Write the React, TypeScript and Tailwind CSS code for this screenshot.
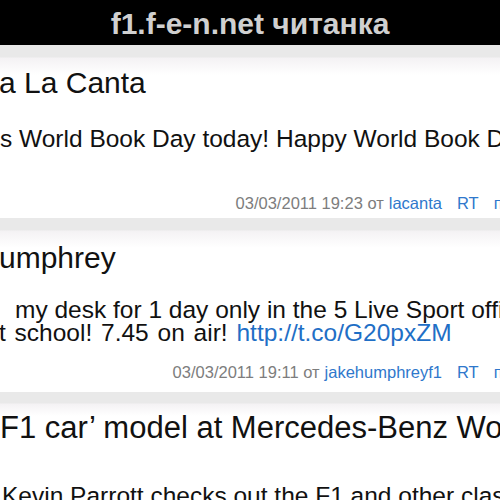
import React from "react";

type Post = {
  title: string;
  lines: React.ReactNode[];
  date: string;
  user: string;
  padTop: string;
  bodyGap: string;
  metaGap: string;
  height: string;
};

const posts: Post[] = [
  {
    title: "a La Canta",
    lines: [<span>s World Book Day today! Happy World Book Day</span>],
    date: "03/03/2011 19:23",
    user: "lacanta",
    padTop: "pt-[23px]",
    bodyGap: "mt-[29px]",
    metaGap: "mt-[45px]",
    height: "h-[173px]",
  },
  {
    title: "umphrey",
    lines: [
      <span className="pl-[15px]">my desk for 1 day only in the 5 Live Sport office</span>,
      <span className="-ml-[1px] [word-spacing:2px]">
        t school! 7.45 on air!{" "}
        <span className="text-[#1f6fc6] [word-spacing:0px]">http://t.co/G20pxZM</span>
      </span>,
    ],
    date: "03/03/2011 19:11",
    user: "jakehumphreyf1",
    padTop: "pt-[25px]",
    bodyGap: "mt-[25px]",
    metaGap: "mt-[20px]",
    height: "h-[174px]",
  },
];

function Meta({ date, user }: { date: string; user: string }) {
  return (
    <div className="flex justify-end text-[16.5px] leading-[16px] whitespace-nowrap">
      <span className="text-[#7d7d7d]">{date} от </span>
      <span className="ml-[5px] text-[#2f78cc]">{user}</span>
      <div className="w-[58px] shrink-0 flex text-[#2f78cc]">
        <span className="ml-[15px]">RT</span>
        <span className="ml-[15px]">перевести</span>
      </div>
    </div>
  );
}

function Card({ post }: { post: Post }) {
  return (
    <div
      className={`${post.height} ${post.padTop} bg-[linear-gradient(#e9e9e9_0px,#e9e9e9_12px,#f4f2f4_13px,#ffffff_30px)]`}
    >
      <div className="text-[30px] leading-[30px] text-[#111] whitespace-nowrap -ml-[1px]">
        {post.title}
      </div>
      <div className={`${post.bodyGap} text-[24.5px] leading-[23px] text-[#111]`}>
        {post.lines.map((line, i) => (
          <div key={i} className="whitespace-nowrap">
            {line}
          </div>
        ))}
      </div>
      <div className={post.metaGap}>
        <Meta date={post.date} user={post.user} />
      </div>
    </div>
  );
}

export default function App() {
  return (
    <div className="w-[500px] h-[500px] overflow-hidden bg-white font-['Liberation_Sans',Arial,sans-serif]">
      <div className="h-[45px] bg-black flex items-center justify-center">
        <span className="text-[30px] font-bold text-[#d0d0d0] pt-[2px]">
          f1.f-e-n.net читанка
        </span>
      </div>

      {posts.map((p) => (
        <Card key={p.user} post={p} />
      ))}

      <div className="h-[120px] pt-[21px] bg-[linear-gradient(#e9e9e9_0px,#e9e9e9_11px,#f4f2f4_12px,#ffffff_24px)]">
        <div className="text-[31px] leading-[30px] text-[#111] whitespace-nowrap">
          F1 car’ model at Mercedes-Benz World
        </div>
        <div className="mt-[41px] pl-[2px] text-[24.5px] leading-[23px] text-[#111] whitespace-nowrap">
          Kevin Parrott checks out the F1 and other classic cars
        </div>
      </div>
    </div>
  );
}
